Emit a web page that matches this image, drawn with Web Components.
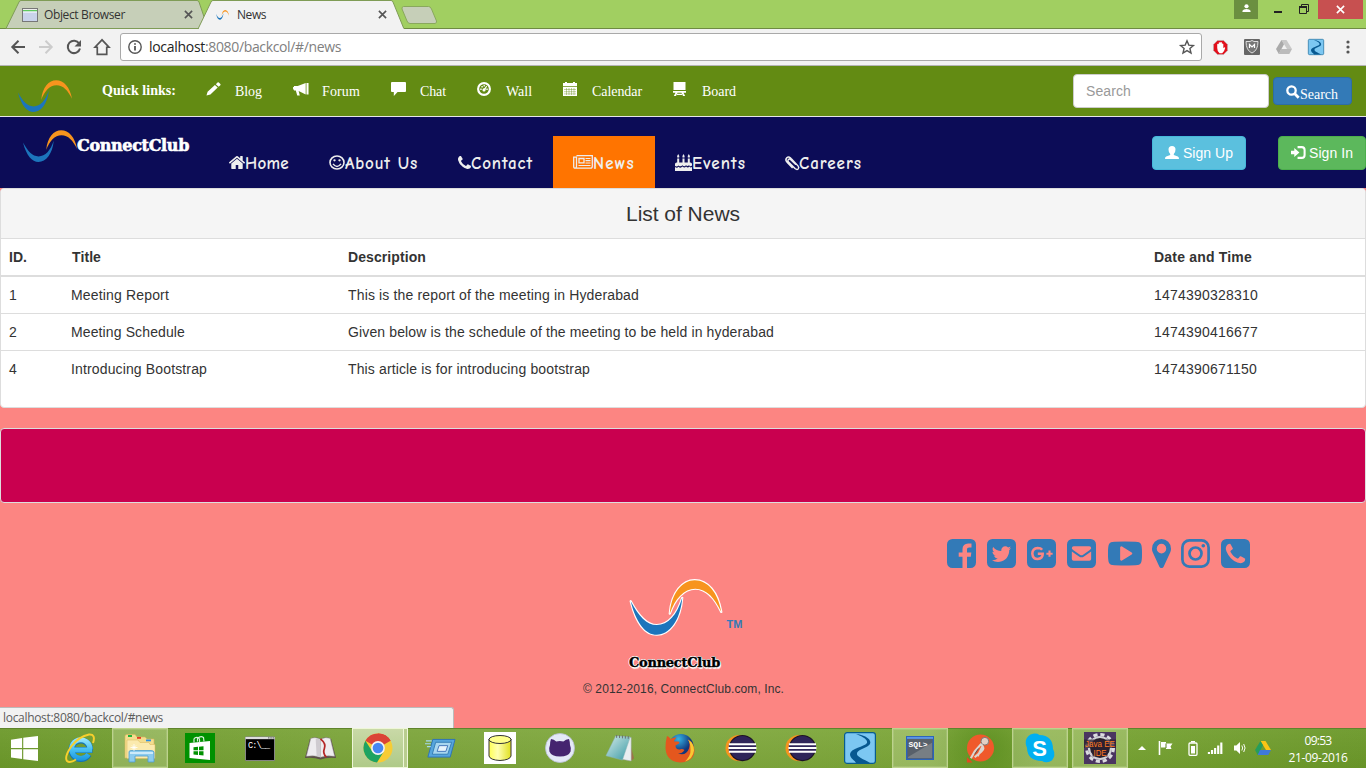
<!DOCTYPE html>
<html lang="en">
<head>
<meta charset="utf-8">
<title>News</title>
<style>
html,body{margin:0;padding:0}
body{width:1366px;height:768px;overflow:hidden;background:#fc8582;font-family:"Liberation Sans",Arial,sans-serif}
</style>
</head>
<body>
<news-desktop></news-desktop>
<script>
const SQ='M1664 416v960q0 119-84.500 203.500t-203.500 84.500h-960q-119 0-203.500-84.500t-84.500-203.500v-960q0-119 84.500-203.500t203.500-84.500h960q119 0 203.500 84.500t84.500 203.500z';
const SWOOSH='<path class="b" fill="#1c75bc" d="M0 38C10 78 27 97 46 97C68 97 88 72 91 32C82 62 66 80 46 80C28 80 14 64 0 38Z"/><path fill="#f7941e" d="M69 60C72 22 92 1 113 1C136 1 154 22 160 57C148 32 134 16 114 16C94 16 78 34 69 60Z"/>';
const RIVER='<rect x=".6" y=".6" width="30.800" height="30.800" rx="2.500" fill="#7cc7f2" stroke="#075c8f" stroke-width="1.200"/><path d="M12 2C22 3 28 8 26 12C24 16 14 17 13 21C12 25 20 27 26 31L12 31C11 28 6 27 6 22C7 16 20 15 23 11C24 8 20 5 12 2Z" fill="#075890"/>';
const ECL='<circle cx="14.500" cy="16" r="14" fill="#f7941e"/><circle cx="18" cy="16" r="14" fill="#1c1226"/><circle cx="18" cy="16" r="12.800" fill="#2f2459"/><path d="M4 11.500h28v9H4z" fill="#2f2459"/><path d="M4 12h28M3.500 16h29M4 20h28" stroke="#fff" stroke-width="2"/>';
const ICONS={
 swoosh:['0 0 160 100',SWOOSH],
 swooshline:['-3 -1 166 102','<g stroke="#fff" stroke-width="4" stroke-linejoin="round">'+SWOOSH.replace(/<path/g,'<path paint-order="stroke"')+'</g>'],
 objwin:['0 0 16 14','<rect x=".5" y=".5" width="15" height="13" fill="#c9d3ea" stroke="#777"/><path d="M1 1h14v1H1z" fill="#eee"/><path d="M1 2h14v1.500H1z" fill="#5fc95f"/><path d="M1 4h14" stroke="#fff"/>'],
 close:['0 0 10 10','<path d="M1 1l8 8M9 1L1 9" stroke="currentColor" stroke-width="1.800"/>'],
 back:['0 0 16 16','<path d="M15 8H2.500M8.500 1.800L2.300 8l6.200 6.200" fill="none" stroke="currentColor" stroke-width="2"/>'],
 forward:['0 0 16 16','<path d="M1 8h12.500M7.500 1.800L13.700 8l-6.200 6.200" fill="none" stroke="currentColor" stroke-width="2"/>'],
 reload:['0 0 16 16','<path d="M13.200 4.500A6.200 6.200 0 1 0 14 9.500" fill="none" stroke="currentColor" stroke-width="2"/><path d="M15 1v6.500H8.500z" fill="currentColor"/>'],
 house:['0 0 16 16','<path d="M8 1.600L1.800 8.200H3.800V14.600h8.400V8.200h2z" fill="none" stroke="currentColor" stroke-width="1.500"/>'],
 info:['0 0 14 14','<circle cx="7" cy="7" r="6.200" fill="none" stroke="#555" stroke-width="1.400"/><path d="M7 6v4.500M7 3.300v1.500" stroke="#555" stroke-width="1.800"/>'],
 star:['0 0 16 16','<path d="M8 1.800l1.800 4.300 4.600.4-3.500 3 1.100 4.500L8 11.600 4 14l1.100-4.500-3.500-3 4.600-.4z" fill="none" stroke="#555" stroke-width="1.400"/>'],
 hand:['0 0 16 16','<path d="M4.700.5h6.600l4.200 4.200v6.600l-4.200 4.200H4.700L.5 11.300V4.700z" fill="#e2101c" stroke="#b6b6b6" stroke-width=".6"/><path d="M4.500 8.500V4.500q.8-1 1.600 0V3q.9-1 1.700 0v-.5q.9-1 1.700.2v1.200q.9-.7 1.500.3v4.500q1.700-1.600 2-.2-1 4-3.200 5.500H7Q4.500 12.500 4.500 8.500z" fill="#fff"/>'],
 shield:['0 0 16 16','<rect width="16" height="16" rx="1" fill="#666"/><path d="M2 2.500h4L8 1.500l2 1h4q0 9-6 11.500Q2 11.500 2 2.500z" fill="#777" stroke="#ddd"/><path d="M5.500 9V5.500L8 8l2.500-2.500V9" fill="none" stroke="#fff" stroke-width="1.200"/>'],
 driveg:['0 0 16 14','<path d="M5.500 0h5L16 9h-5z" fill="#c9c9c9"/><path d="M5.500 0L8 4.300 2.800 14 0 9z" fill="#aaa"/><path d="M5 9h11l-2.700 5H2.700z" fill="#bbb"/>'],
 drivec:['0 0 16 14','<path d="M5.500 0h5L16 9h-5z" fill="#fbc515"/><path d="M5.500 0L8 4.300 2.800 14 0 9z" fill="#259d5b"/><path d="M5 9h11l-2.700 5H2.700z" fill="#3f79d9"/>'],
 river:['0 0 32 32',RIVER],
 dots:['0 0 4 14','<g fill="#555"><circle cx="2" cy="2" r="1.600"/><circle cx="2" cy="7" r="1.600"/><circle cx="2" cy="12" r="1.600"/></g>'],
 person:['0 0 10 10','<circle cx="5" cy="2.500" r="2.300"/><path d="M0.500 9V7.500Q1.500 5.500 5 5.500t4.500 2V9z"/>'],
 restore:['0 0 10 10','<path d="M2.500 2V.5h7v7H8" fill="none" stroke="#222"/><path d="M.5 3h7v6.500h-7z" fill="none" stroke="#222"/><path d="M0 3h8" stroke="#222" stroke-width="2"/>'],
 pencil:['0 0 16 16','<path d="M.5 15.500l1.200-4.300L9.500 3.400l3 3-7.800 7.900zM10.500 2.500L12.300.7q.7-.6 1.400 0l1.600 1.600q.6.700 0 1.400l-1.800 1.800z"/>'],
 horn:['0 0 17 14','<path d="M1 4h4L13.500 1v11.500L6 9l1.200 4.500H4.500L3 8.500H1zM14.300 1h2.200v11.500h-2.200z"/><path d="M0 5h1v2.500H0z"/>'],
 chat:['0 0 16 14','<path d="M1 0h14q1 0 1 1v8q0 1-1 1H7l-4 4v-4H1q-1 0-1-1V1q0-1 1-1z"/>'],
 gauge:['0 0 15 15','<circle cx="7.500" cy="7.500" r="6.300" fill="none" stroke="currentColor" stroke-width="2.300"/><circle cx="7.500" cy="8.500" r="1.700"/><path d="M7 8l3-4 .8.6L8.500 9zM3.500 7h1.500v1.500H3.500zM4.700 4.400h1.500v1.500H4.700zM7 3.200h1.400v1.500H7zM10 7h1.500v1.500H10z"/>'],
 cal:['0 0 14 14','<path d="M0 1h2V0h2v1h6V0h2v1h2v3H0zM0 4.800h14V14H0z"/><path d="M1 7.500h12M1 9.700h12M1 11.900h12M3.500 6v7M6 6v7M8.500 6v7M11 6v7" stroke="#638b13" stroke-width=".4"/>'],
 board:['0 0 13 13','<path d="M.5 0h12v7.500H.5zM0 8.300h13V10H0zM2.500 10h2L3 13H.800zM8.500 10h2l1.700 3h-2.200zM4 10.800h5v1.200H4z"/>'],
 search:['0 0 16 16','<circle cx="6.300" cy="6.300" r="4.800" fill="none" stroke="currentColor" stroke-width="2.600"/><path d="M10 10l4.500 4.500" stroke="currentColor" stroke-width="3.200"/>'],
 user:['0 0 14 13','<path d="M7 0q3.500 0 3.500 3.500 0 3-1.700 4.500v1l4 1.600q1.200.5 1.200 2.400H0q0-1.900 1.200-2.400l4-1.600V8Q3.500 6.500 3.500 3.500 3.500 0 7 0z"/>'],
 login:['0 0 16 13','<path d="M0 4.800h3.500V2L9 6.500 3.500 11V8.200H0z"/><path d="M7 1.100h4.500q3 0 3 3v4.800q0 3-3 3H7" fill="none" stroke="currentColor" stroke-width="2.200"/>'],
 home:['90 250 1612 1290','<path d="M1472 992v480q0 26-19 45t-45 19h-384v-384h-256v384h-384q-26 0-45-19t-19-45v-480q0-1 .5-3t.5-3l575-474 575 474q1 2 1 6zm223-69l-62 74q-8 9-21 11h-3q-13 0-21-7l-692-577-692 577q-12 8-24 7-13-2-21-11l-62-74q-8-10-7-23.500t11-21.500l719-599q32-26 76-26t76 26l244 204v-195q0-14 9-23t23-9h192q14 0 23 9t9 23v408l219 182q10 8 11 21.500t-7 23.500z"/>'],
 smile:['0 0 16 16','<circle cx="8" cy="8" r="7" fill="none" stroke="currentColor" stroke-width="1.600"/><circle cx="5.500" cy="5.600" r="1.200"/><circle cx="10.500" cy="5.600" r="1.200"/><path d="M4 9.500q4 5.500 8 0" fill="none" stroke="currentColor" stroke-width="1.400"/>'],
 phone:['192 128 1408 1408','<path d="M1600 1240q0 27-10 70.500t-21 68.500q-21 50-122 106-94 51-186 51-27 0-53-3.500t-57.500-12.500-47-14.500-55.500-20.500-49-18q-98-35-175-83-127-79-264-216t-216-264q-48-77-83-175-3-9-18-49t-20.500-55.500-14.500-47-12.500-57.500-3.500-53q0-92 51-186 56-101 106-122 25-11 68.500-21t70.500-10q14 0 21 3 18 6 53 76 11 19 30 54t35 63.500 31 53.500q3 4 17.500 25t21.500 35.500 7 28.500q0 20-28.500 50t-62 55-62 53-28.500 46q0 9 5 22.500t8.500 20.500 14 24 11.500 19q76 137 174 235t235 174q2 1 19 11.500t24 14 20.500 8.500 22.500 5q18 0 46-28.500t53-62 55-62 50-28.500q14 0 28.500 7t35.500 21.500 25 17.500q25 15 53.500 31t63.500 35 54 30q70 35 76 53 3 7 3 21z"/>'],
 news:['0 0 20 14','<path d="M3.500.7h15.800v10.500q0 2-1.800 2H2.200q-1.500 0-1.500-1.700V2.200h2.800v9q0 2-1.300 2" fill="none" stroke="currentColor" stroke-width="1.300"/><path d="M6 3.500h5v4.300H6z" fill="none" stroke="currentColor" stroke-width="1.300"/><path d="M12.500 3.500h5M12.500 5.700h5M12.500 8h5M5.500 10.500h12" stroke="currentColor" stroke-width="1.200"/>'],
 cake:['0 0 17 17','<path d="M0 17v-4q2 1.500 3.500-.3 2 2 4-.1 2 2 3.500 0 2 2 3.300 0 1.500 1.500 2.700.4v4zM0 12v-2q0-1.500 1.700-1.500H2.200V4.500h2v4h3.300v-4h2v4h3.300v-4h2v4h.5Q17 8.500 17 10v1.500q-1.500 1.500-3-.2-1.500 1.600-3 0-1.800 2-3.500 0-2 2-4 .1Q2 13 0 12zM2.200 3.500Q1.600 2 3.200 0q1.700 2 1 3.500zM7.500 3.500Q6.900 2 8.500 0q1.700 2 1 3.500zM12.800 3.500Q12.200 2 13.800 0q1.700 2 1 3.500z"/>'],
 clip:['0 0 14 16','<path d="M10.500 9.500L5.500 4.200Q4 3 3 4.200 2 5.500 3.200 6.700l6.500 7q2 1.700 3.200.3 1.200-1.500-.2-3.200L6 3.200Q3.500 0 1.500 2.200-.5 4.500 1.800 7l5.500 6" transform="translate(.3 -.3)" fill="none" stroke="currentColor" stroke-width="1.500"/>'],
 fb:['128 128 1536 1536','<path d="M1376 128q119 0 203.500 84.500t84.500 203.500v960q0 119-84.500 203.500t-203.500 84.500h-188v-595h199l30-232h-229v-148q0-56 23.500-84t91.500-28l122-1v-207q-63-9-178-9-136 0-217.500 80t-81.500 226v171h-200v232h200v595h-532q-119 0-203.500-84.500t-84.500-203.500v-960q0-119 84.500-203.500t203.500-84.500h960z"/>'],
 tw:['128 128 1536 1536','<path d="M1408 610q-56 25-121 34 68-40 93-117-65 38-134 51-61-66-153-66-87 0-148.500 61.500t-61.500 148.500q0 29 5 48-129-7-242-65t-192-155q-29 50-29 106 0 114 91 175-47-1-100-26v2q0 75 50 133.500t123 72.500q-29 8-51 8-13 0-39-4 21 63 74.500 104t121.500 42q-116 90-261 90-26 0-50-3 148 94 322 94 112 0 210-35.500t168-95 120.500-137 75-162 24.500-168.500q0-18-1-27 63-45 105-109z'+SQ+'" fill-rule="evenodd"/>'],
 gp:['128 128 1536 1536','<path d="'+SQ+'"/><path d="M930 700Q860 600 690 600Q420 620 410 900Q430 1180 690 1190Q970 1160 960 910H700" fill="none" stroke="#fc8582" stroke-width="135"/><path d="M1320 740v330M1155 905h330" stroke="#fc8582" stroke-width="110"/>'],
 mail:['128 128 1536 1536','<path d="'+SQ+'"/><path d="M384 620q0-100 100-108h824q100 8 100 108-20 60-90 108L980 960q-80 60-168 0L470 725q-80-50-86-105zM384 790l380 260q130 90 264 0l380-260v400q0 90-96 90H480q-96 0-96-90z" fill="#fc8582"/>'],
 yt:['0 128 1792 1536','<path d="M1280 896q0-37-30-54l-512-320q-31-20-65-2-33 18-33 56v640q0 38 33 56 16 8 31 8 20 0 34-10l512-320q30-17 30-54zm512 0q0 96-1 150t-8.500 136.500-22.500 147.500q-16 73-69 123t-124 58q-222 25-671 25t-671-25q-71-8-124.500-58t-69.500-123q-14-65-21.500-147.500t-8.500-136.500-1-150 1-150 8.500-136.500 22.500-147.500q16-73 69-123t124-58q222-25 671-25t671 25q71 8 124.500 58t69.500 123q14 65 21.500 147.500t8.500 136.500 1 150z"/>'],
 pin:['384 128 1024 1536','<path d="M1152 640q0-106-75-181t-181-75-181 75-75 181 75 181 181 75 181-75 75-181zm256 0q0 109-33 179l-364 774q-16 33-47.500 52t-67.500 19-67.500-19-46.500-52l-365-774q-33-70-33-179 0-212 150-362t362-150 362 150 150 362z"/>'],
 insta:['0 0 29 29','<rect x="1.400" y="1.400" width="26.200" height="26.200" rx="7" fill="none" stroke="currentColor" stroke-width="2.700"/><circle cx="14.500" cy="14.500" r="6" fill="none" stroke="currentColor" stroke-width="2.700"/><circle cx="22.300" cy="6.700" r="1.800"/>'],
 phonesq:['128 128 1536 1536','<path fill-rule="evenodd" d="M1408 1193q0-11-2-16t-18-16.500-40.500-25-47.500-26.500-45.500-25-28.500-15q-5-3-19-13t-25-15-21-5q-15 0-36.500 20.500t-39.500 45-38.500 45-33.500 20.500q-7 0-16.500-3.500t-15.500-6.500-17-9.500-14-8.500q-99-55-170-126.500t-127-170.500q-2-3-8.500-14t-9.500-17-6.500-15.500-3.500-16.500q0-13 20.500-33.500t45-38.500 45-39.500 20.500-36.500q0-10-5-21t-15-25-13-19q-3-6-15-28.500t-25-45.500-26.500-47.500-25-40.500-16.500-18-16-2q-48 0-101 22-46 21-80 94.500t-34 130.500q0 16 2.500 34t5 30.500 9 33 10 29.500 12.500 33 11 30q60 164 216.500 320.500t320.500 216.500q6 2 30 11t33 12.500 29.500 10 33 9 30.500 5 34 2.500q57 0 130.500-34t94.500-80q22-53 22-101z'+SQ+'"/>'],
 win:['0 0 28 26','<path fill="#fff" d="M0 3.800L11.500 2v10.500H0zM12.700 1.800L28 0v12.500H12.700zM0 13.700h11.500V24L0 22.300zM12.700 13.700H28V26l-15.300-1.900z"/>'],
 ie:['0 0 32 32','<defs><linearGradient id="g" gradientUnits="userSpaceOnUse" x1="0" y1="5" x2="0" y2="30"><stop stop-color="#a5ecfd"/><stop offset=".5" stop-color="#48c0f2"/><stop offset="1" stop-color="#1390dc"/></linearGradient></defs><g fill="none"><path d="M9 18H28.500M26.100 18A9.300 9.300 0 1 0 24.800 22.500" stroke="#1474b4" stroke-width="6"/><path d="M9.500 18H28M26.100 17.500A9.300 9.300 0 1 0 24.500 22.300" stroke="url(#g)" stroke-width="4.800"/><path d="M29 11Q32 2 25 2.500 15 4.500 7.500 14 0 25 3 29q3 2.500 9-1.500" stroke="#f8cf2d" stroke-width="2"/></g>'],
 folder:['0 0 32 32','<path d="M1 4q0-1.500 2-1.500h8l2 2.500h8l2 2h7v19H1z" fill="#f4dd8e" stroke="#d8b65a" stroke-width=".6"/><path d="M3 8h11l2 2.500h9l1 2h5v14H3z" fill="#fbeaae" stroke="#d8b65a" stroke-width=".5"/><path d="M4 3h4v2H4z" fill="#1fb43a"/><path d="M13 5h4v1.800h-4z" fill="#e53b22"/><path d="M22 7.500h5v1.800h-5z" fill="#2c8ee0"/><path d="M5 20q0-1.500 2-1.500h20q3 0 3 2V30h-6v-6H11v6H5z" fill="#8ccbee" stroke="#4f9dce" stroke-width=".8"/><path d="M6 20h23v2H6z" fill="#cdeafa"/><path d="M10 12v7M6.500 15.500h7M8 13.500l4 4M12 13.500l-4 4" stroke="#fff" stroke-width=".8"/>'],
 store:['0 0 30 30','<path d="M0 0h30v30H0z" fill="#009100"/><path d="M4.500 10l20.500-2v19L4.500 25z" fill="#fff"/><path d="M9 9.500V6q1-2 4-1.500 2 .5 1.500 5M12.500 8.500V5.500q3-3 6-1l.5 4" fill="none" stroke="#d9efd9" stroke-width="1.200"/><path d="M8.500 14.200l4.500-.4v3.500H8.500zM14 13.700l4.500-.4v4H14zM8.500 18.200H13V22l-4.500-.4zM14 18.200h4.500v4.300L14 22z" fill="#009100"/>'],
 cmd:['0 0 30 26','<path d="M.5 1h29v24.500H.5z" fill="#000" stroke="#888"/><path d="M.5 1h29v2.300H.5z" fill="#ddd"/><path d="M23 2h1.500M25.300 2h1.500M27.500 2H29" stroke="#555"/><text x="3" y="12.500" font-family="Liberation Mono,monospace" font-size="8.500" fill="#fff" textLength="22">C:\\__</text>'],
 book:['0 0 34 26','<path d="M1 23L6 3q5-3 11 0 6-3 11 0l5 20q-9-1-16 1.500Q10 22 1 23z" fill="#5d504a"/><path d="M2.500 21L7 2.500q5-2 10 1V22q-6-2.500-14.500-1zM31.500 21L27 2.500q-5-2-10 1V22q6-2.500 14.500-1z" fill="#eeecef" stroke="#aaa" stroke-width=".5"/><path d="M12 2.500l5 1V22l-4-1.200z" fill="#cfcbd0"/><path d="M17 3q6 5 4 10t2 9" fill="none" stroke="#b42727" stroke-width="1.800"/>'],
 chrome:['0 0 30 30','<circle cx="15" cy="15" r="14.500" fill="#f7cc35"/><path d="M15 15L2.400 7.800A14.500 14.500 0 0 1 27.600 7.800z" fill="#db4437"/><path d="M15 .5A14.500 14.500 0 0 1 27.600 7.800H15z" fill="#db4437"/><path d="M2.400 7.700A14.500 14.500 0 0 0 14 29.500l6.500-10.500L9 18z" fill="#1da362"/><circle cx="15" cy="15" r="6.900" fill="#f3f3f3"/><circle cx="15" cy="15" r="5.300" fill="#4687f2"/>'],
 runner:['0 0 32 22','<path d="M8 1.500h23l-5 18.500H3z" fill="#56a5dc" stroke="#2d73b8"/><path d="M11 4.500h16.500L23.500 17H7.500z" fill="#a7d6ef" stroke="#357eb5"/><path d="M14.500 8h9l-2 6h-9z" fill="#e6f3fb" stroke="#4377ba"/><path d="M1 3h6M0 6h6M2 9h4" stroke="#a6d9ee" stroke-width="1.200"/>'],
 db:['0 0 32 32','<path d="M0 0h32v32H0z" fill="#fff"/><defs><linearGradient id="g"><stop stop-color="#ff5"/><stop offset=".4" stop-color="#ffffb0"/><stop offset="1" stop-color="#e0e020"/></linearGradient></defs><path d="M5 7v17q1 4 11 4.500 10-.5 11-4.500V7z" fill="url(#g)" stroke="#333"/><ellipse cx="16" cy="7.500" rx="11" ry="4" fill="#ffff8c" stroke="#333"/>'],
 cat:['0 0 30 30','<circle cx="15" cy="15" r="14.500" fill="#e4e9f7" stroke="#b9bfd5" stroke-width=".8"/><path d="M6 6q3 .5 5.200 2.400 3.600-.6 7.200 0Q20.800 6.500 24 6q1.200 3.600 1 6 1.400 3 .6 6.500-2 5-10.600 5t-10.600-5q-.8-3.500.6-6.500Q4.800 9.600 6 6z" fill="#45246f"/>'],
 notepad:['0 0 32 30','<defs><linearGradient id="g" x2="1" y2="1"><stop stop-color="#d5ebe9"/><stop offset="1" stop-color="#3798a3"/></linearGradient></defs><path d="M24 3l6 22-3 3z" fill="#9b7449"/><path d="M11 2l16 1.500L27 28 17 26z" fill="#e9eef0" stroke="#98a3a6" stroke-width=".5"/><path d="M11 2l15 1.200L18 27 1 22.500z" fill="url(#g)" stroke="#8cb4b5" stroke-width=".5"/><path d="M12 1v3M15 1.200v3M18 1.500v3M21 1.800v3M24 2v3" stroke="#666" stroke-width=".9"/>'],
 fox:['0 0 30 30','<defs><radialGradient id="g" cx=".4" cy=".2"><stop stop-color="#35b4e6"/><stop offset="1" stop-color="#12377d"/></radialGradient></defs><circle cx="16" cy="13.500" r="12.500" fill="url(#g)"/><path d="M2 3q2 .5 3.500 3 3-2 6-1.500-2 2-2.500 4h4q2 0 1 2l-3.500 2q0 4 4 4 3-1 5 .5-2 3.500-6.500 3.500 8 3 11-5 1.500-5-1-9 6 3.500 6.500 11Q29 29 15 29.500 1 28.500.5 15 .5 8 2 3z" fill="#e4571e"/><path d="M23 6.500q6 3.500 6 11Q28 26 20 28.500q6-6 5.500-12Q25.500 10 23 6.500z" fill="#f9c833"/>'],
 eclipse:['0 0 32 32',ECL],
 sql:['0 0 28 25','<path d="M.7.700h26.600v23.600H.7z" fill="#58606a" stroke="#2c63bb" stroke-width="1.400"/><path d="M1 1h26v2H1z" fill="#5b96e5"/><path d="M2 22L26 7v16H2z" fill="#777e84"/><text x="2.500" y="11" font-family="Liberation Mono,monospace" font-size="8" font-weight="bold" fill="#fff" textLength="19">SQL&gt;</text>'],
 postman:['0 0 30 30','<circle cx="15" cy="14.500" r="14" fill="#f0592b"/><path d="M1 24l6 5.500H1z" fill="#e24a20"/><circle cx="19.500" cy="7.500" r="4" fill="#e3cfc4" stroke="#777" stroke-width="1"/><path d="M16 10l-7 8-4 7M16 11q4 4 0 7l-7 6M17 13l-5 10" fill="none" stroke="#ddd5cf" stroke-width="2.200"/><path d="M13 15l-4 6" stroke="#555"/>'],
 skype:['0 0 30 30','<path d="M8 .7q4-.5 6.500 1.200Q28 2.500 28 16q2 3 1.300 7-2 6.500-8 6.200-2.500-.2-4.300-1.300Q2.500 28 2 15 0 11.500.8 7.500 2.500 1.700 8 .7z" fill="#00aff0"/><text x="7.300" y="22.500" font-family="Liberation Sans,sans-serif" font-weight="bold" font-size="22" fill="#fff" textLength="15.500">S</text>'],
 javaee:['0 0 32 32','<path d="M0 0h32v32H0z" fill="#4a3560"/><circle cx="16" cy="16" r="13.500" fill="none" stroke="#dcdce0" stroke-width="3" stroke-dasharray="4.200 2.860"/><circle cx="16" cy="16" r="11" fill="#28202c" stroke="#d2d2d6" stroke-width="2.200"/><path d="M0 7.500h32v8.500H0zM8.500 16h15v8.500h-15z" fill="#2e2030" opacity=".75"/><text x="1" y="15" font-family="Liberation Sans,sans-serif" font-size="9.500" fill="#ff7a22" textLength="30" lengthAdjust="spacingAndGlyphs">Java EE</text><text x="9.500" y="23.500" font-family="Liberation Sans,sans-serif" font-size="9.500" fill="#ff7a22" textLength="13" lengthAdjust="spacingAndGlyphs">IDE</text>'],
 up:['0 0 8 5','<path d="M0 4L4 0l4 4z" fill="#fff"/>'],
 flag:['0 0 16 16','<path d="M1.500 1v14" stroke="#fff" stroke-width="1.600"/><path d="M3 2h5v1.500h6.500l-2 3 1 2.500H8V7.500H3z" fill="#fff"/><path d="M8 3.500V8" stroke="#587d25"/>'],
 battery:['0 0 10 15','<path d="M3 0h4v1.500H3z" fill="#fff"/><rect x="1" y="2" width="8" height="12.300" rx="1" fill="none" stroke="#fff" stroke-width="1.300"/><path d="M3 5h4v7.500H3z" fill="#fff"/>'],
 signal:['0 0 16 12','<path d="M1 12v-2M4.300 12V8M7.600 12V6M10.900 12V3.500M14.200 12V.5" stroke="#fff" stroke-width="2.300"/>'],
 speaker:['0 0 13 14','<path d="M0 4.500h2.500L6.500 1v12L2.500 9.500H0z" fill="#fff"/><path d="M8.500 4.500q1.700 2.500 0 5M10.500 3q3 4 0 8" fill="none" stroke="#fff" stroke-width="1"/>']
};

/* Inline icon: <ui-icon name w h> */
customElements.define('ui-icon',class extends HTMLElement{
 connectedCallback(){
  if(this.shadowRoot)return;
  const [vb,body]=ICONS[this.getAttribute('name')],w=this.getAttribute('w'),h=this.getAttribute('h')||w;
  this.attachShadow({mode:'open'}).innerHTML=`<style>:host{display:inline-block;flex:none;width:${w}px;height:${h}px}svg{display:block;overflow:visible}</style><svg width="${w}" height="${h}" viewBox="${vb}" preserveAspectRatio="none" fill="currentColor">${body}</svg>`;
 }
});
/* Label tracked to an exact width */
customElements.define('fit-text',class extends HTMLElement{
 connectedCallback(){
  if(this.shadowRoot)return;
  const w=+this.getAttribute('w'),n=this.textContent.length;
  this.attachShadow({mode:'open'}).innerHTML=`<style>:host{display:inline-block;flex:none;white-space:pre;width:${w}px}</style><span><slot></slot></span>`;
  const s=this.shadowRoot.querySelector('span');
  s.style.letterSpacing=(w-s.getBoundingClientRect().width)/n+'px';
 }
});
const define=(name,html)=>customElements.define(name,class extends HTMLElement{
 connectedCallback(){if(!this.shadowRoot)this.attachShadow({mode:'open'}).innerHTML=typeof html==='function'?html(this):html}
});

define('tab-strip',`<style>
:host{display:block;height:29px;background:#a1cf61;position:relative;font:12px/16px "Open Sans","Noto Sans",sans-serif;color:#333}
svg.shape{position:absolute;left:0;top:0}
.row{position:relative;display:flex;height:29px}
.tab{display:flex;align-items:center;height:29px;box-sizing:border-box}
.t1{width:193px;padding-left:22px;margin-right:12px}.t2{width:182px;padding-left:11px}
.tab ui-icon:last-child{margin-left:auto;color:#555}
fit-text{margin-left:6px}
.ctl{margin-left:auto;display:flex;align-items:flex-start}
.who{width:24px;height:19px;background:#6b8f40;color:#fff;display:flex;justify-content:center;padding-top:4px;box-sizing:border-box}
.min{width:8px;height:2px;background:#222;margin:11px 17px 0 16px}
.x{width:45px;height:19px;background:#c75050;color:#fff;display:flex;align-items:center;justify-content:center;margin:0 3px 0 9px}
</style>
<svg class="shape" width="1366" height="29"><path d="M0 28.500H1366" stroke="#6e8b42"/><path d="M6 28.500L19 2q.5-1.500 2-1.500H197q1.500 0 2 1.500l9 26.500z" fill="#c6cfb8" stroke="#7f9c56"/><path d="M402 9q-.5-2 1.500-2.500h25q2 0 3 2.500l5 12q.5 2-1.500 2.500h-25q-2 0-3-2.500z" fill="#c6cfb8" stroke="#89a85d"/><path d="M198 29L211 2q.5-1.500 2-1.500H391q1.500 0 2 1.500L404 29z" fill="#f2f2f2" stroke="#7f9c56"/><path d="M199 28.500H403.500" stroke="#f2f2f2"/></svg>
<div class="row"><div class="tab t1"><ui-icon name="objwin" w="16" h="14"></ui-icon><fit-text w="81">Object Browser</fit-text><ui-icon name="close" w="9"></ui-icon></div>
<div class="tab t2"><ui-icon name="swoosh" w="13" h="10"></ui-icon><fit-text w="29" style="margin-left:8px">News</fit-text><ui-icon name="close" w="9"></ui-icon></div>
<div class="ctl"><div class="who"><ui-icon name="person" w="9"></ui-icon></div><div class="min"></div><ui-icon name="restore" w="10" style="margin-top:4px"></ui-icon><div class="x"><ui-icon name="close" w="9"></ui-icon></div></div></div>`);

define('address-bar',`<style>
:host{display:flex;align-items:center;height:37px;box-sizing:border-box;background:#f2f2f2;border-bottom:1px solid #b5b5b5;padding:0 15px 0 10px;color:#555;font:14px/20px "Open Sans","Noto Sans",sans-serif}
.url{display:flex;align-items:center;box-sizing:border-box;width:1082px;height:28px;background:#fff;border:1px solid #a9a9a9;border-radius:3px;padding:0 6px 0 7px;margin:0 11px 0 10px}
.url ui-icon:last-child{margin-left:auto}
.path{color:#808080}
</style><ui-icon name="back" w="16"></ui-icon><ui-icon name="forward" w="16" style="color:#ccc;margin-left:12px"></ui-icon><ui-icon name="reload" w="16" style="margin-left:12px"></ui-icon><ui-icon name="house" w="18" style="margin-left:11px;margin-right:-1px"></ui-icon>
<div class="url"><ui-icon name="info" w="14"></ui-icon><fit-text w="56" style="color:#222;margin-left:7px">localhost</fit-text><fit-text w="136" class="path">:8080/backcol/#/news</fit-text><ui-icon name="star" w="16"></ui-icon></div>
<ui-icon name="hand" w="15"></ui-icon><ui-icon name="shield" w="16" style="margin-left:16px"></ui-icon><ui-icon name="driveg" w="16" h="14" style="margin-left:16px"></ui-icon><ui-icon name="river" w="16" style="margin-left:16px"></ui-icon><ui-icon name="dots" w="4" h="14" style="margin-left:22px"></ui-icon>`);

define('quick-link',e=>`<style>:host{display:flex;margin-right:31px;height:20px}span{width:29px;display:flex;align-items:flex-start;flex:none}</style><span><ui-icon name="${e.getAttribute('icon')}" w="${e.getAttribute('iw')}" h="14"></ui-icon></span><div style="padding-top:1px"><slot></slot></div>`);

define('quick-bar',`<style>
:host{display:flex;align-items:flex-start;height:51px;box-sizing:border-box;background:#638b13;border-bottom:1px solid #e7e7e7;color:#fff;font:14px/18px "Liberation Serif",serif;padding:0 14px 0 18px}
.ql{font-weight:bold;margin:16px 30px 0}
.links{display:flex;padding-top:16px}
.field{margin:8px 4px 0 auto;width:196px;height:34px;box-sizing:border-box;border:1px solid #ccc;border-radius:4px;background:#fff;color:#999;font:14px/32px "Liberation Sans",sans-serif;padding-left:12px}
.btn{width:79px;height:28px;margin-top:11px;box-sizing:border-box;border:1px solid #2e6da4;border-radius:4px;background:#337ab7;display:flex;padding:7px 0 0 12px}
</style><ui-icon name="swoosh" w="54" h="33" style="margin-top:14px"></ui-icon><div class="ql"><fit-text w="74">Quick links:</fit-text></div>
<div class="links"><quick-link icon="pencil" iw="15"><fit-text w="27">Blog</fit-text></quick-link><quick-link icon="horn" iw="16"><fit-text w="38">Forum</fit-text></quick-link><quick-link icon="chat" iw="15"><fit-text w="26">Chat</fit-text></quick-link><quick-link icon="gauge" iw="14"><fit-text w="26">Wall</fit-text></quick-link><quick-link icon="cal" iw="14"><fit-text w="50">Calendar</fit-text></quick-link><quick-link icon="board" iw="13"><fit-text w="34">Board</fit-text></quick-link></div>
<div class="field"><fit-text w="45">Search</fit-text></div><div class="btn"><ui-icon name="search" w="14"></ui-icon><fit-text w="38" style="line-height:20px">Search</fit-text></div>`);

define('nav-item',e=>`<style>:host{display:flex;height:52px;padding:0 20px;box-sizing:border-box;color:#eee;font:bold 17px/56px "Comic Sans MS","Comic Neue",Lato,sans-serif}:host([active]){background:#ff7400}ui-icon{align-self:flex-start}</style><ui-icon name="${e.getAttribute('icon')}" w="${e.getAttribute('iw')}" h="${e.getAttribute('ih')}" style="margin-top:${e.getAttribute('it')}px"></ui-icon><slot></slot>`);

define('club-nav',`<style>
:host{display:flex;align-items:flex-start;height:71px;background:#0c0c57;color:#fff;padding-left:23px;box-sizing:border-box}
.brand{font:900 16px/20px "Cooper Black","DejaVu Serif",serif;-webkit-text-stroke:.6px #fff;margin-top:19px}
.menu{display:flex;margin:19px 0 0 20px}
.btn{height:34px;box-sizing:border-box;border:1px solid;border-radius:4px;display:flex;align-items:center;padding-left:12px;margin-top:19px;font-size:14px;flex:none}
.up{width:94px;background:#5bc0de;border-color:#46b8da;margin-left:auto;margin-right:32px}
.in{width:88px;background:#5cb85c;border-color:#4cae4c}
</style><ui-icon name="swoosh" w="54" h="33" style="margin-top:13px"></ui-icon><div class="brand"><fit-text w="112">ConnectClub</fit-text></div>
<div class="menu"><nav-item icon="home" iw="16" ih="13" it="20"><fit-text w="44">Home</fit-text></nav-item><nav-item icon="smile" iw="16" ih="15" it="19"><fit-text w="73">About Us</fit-text></nav-item><nav-item icon="phone" iw="13" ih="13" it="20"><fit-text w="62">Contact</fit-text></nav-item><nav-item active icon="news" iw="20" ih="14" it="19"><fit-text w="42">News</fit-text></nav-item><nav-item icon="cake" iw="17" ih="17" it="18"><fit-text w="54" style="margin-right:-1px">Events</fit-text></nav-item><nav-item icon="clip" iw="14" ih="15" it="20"><fit-text w="63">Careers</fit-text></nav-item></div>
<div class="btn up"><ui-icon name="user" w="14" h="13" style="margin-top:-2px"></ui-icon><fit-text w="50" style="margin-left:4px">Sign Up</fit-text></div><div class="btn in"><ui-icon name="login" w="15" h="13" style="margin-top:-1px"></ui-icon><fit-text w="44" style="margin-left:3px">Sign In</fit-text></div>`);

define('news-panel',()=>{
 const rows=[['1',['Meeting Report',98],['This is the report of the meeting in Hyderabad',291],['1474390328310',104]],['2',['Meeting Schedule',114],['Given below is the schedule of the meeting to be held in hyderabad',426],['1474390416677',104]],['4',['Introducing Bootstrap',136],['This article is for introducing bootstrap',242],['1474390671150',103]]];
 return `<style>
:host{display:block;height:220px;box-sizing:border-box;border:1px solid #ddd;border-radius:4px;background:#fff;color:#333;font-size:14px;line-height:20px;overflow:hidden}
.head{height:50px;box-sizing:border-box;background:#f5f5f5;border-bottom:1px solid #ddd;text-align:center;font-size:21px;line-height:49px}
.r{display:grid;grid-template-columns:62px 277px 806px 1fr;padding:8px 0 8px 8px;height:37px;box-sizing:border-box;border-top:1px solid #ddd}
.h{border-top:0;border-bottom:2px solid #ddd;height:38px;font-weight:bold}
.h+.r{border-top:0;height:36px}
</style><div class="head"><fit-text w="114">List of News</fit-text></div>
<div class="r h"><div><fit-text w="18">ID.</fit-text></div><div style="padding-left:1px"><fit-text w="29">Title</fit-text></div><div><fit-text w="78">Description</fit-text></div><div><fit-text w="98">Date and Time</fit-text></div></div>`+rows.map(([id,...c])=>`<div class="r"><div>${id}</div>${c.map(([t,w])=>`<div><fit-text w="${w}">${t}</fit-text></div>`).join('')}</div>`).join('');
});

define('social-links',`<style>:host{display:flex;color:#337ab7;height:29px}</style>
<ui-icon name="fb" w="29"></ui-icon><ui-icon name="tw" w="29" style="margin-left:11px"></ui-icon><ui-icon name="gp" w="29" style="margin-left:11px"></ui-icon><ui-icon name="mail" w="29" style="margin-left:11px"></ui-icon><ui-icon name="yt" w="34" h="29" style="margin-left:12px"></ui-icon><ui-icon name="pin" w="19" h="29" style="margin-left:10px"></ui-icon><ui-icon name="insta" w="29" style="margin-left:10px"></ui-icon><ui-icon name="phonesq" w="29" style="margin-left:11px"></ui-icon>`);

define('club-footer',`<style>
:host{display:flex;flex-direction:column;align-items:center;color:#333}
social-links{align-self:flex-end;margin-right:116px}
.logo{display:flex;margin:11px 0 0 5px}
.tm{color:#337ab7;font:bold 11px/14px "Liberation Sans",sans-serif;margin:38px 0 0 4px}
.name{font:900 13px/16px "Cooper Black","DejaVu Serif",serif;color:#000;margin:18px 0 0 -17px;text-shadow:1px 0 #fff,0 1px #fff,-1px 0 #fff,0 -1px #fff,1px 1px #fff,1px 2px 1px #fff;-webkit-text-stroke:.4px #000}
.copy{font-size:12px;line-height:16px;margin:10px 0 0 1px}
</style><social-links></social-links><div class="logo"><ui-icon name="swooshline" w="94" h="58"></ui-icon><div class="tm"><fit-text w="16">TM</fit-text></div></div><div class="name"><fit-text w="91">ConnectClub</fit-text></div><div class="copy"><fit-text w="201">© 2012-2016, ConnectClub.com, Inc.</fit-text></div>`);

define('task-cell',e=>`<style>:host{width:56px;height:40px;margin-right:4px;box-sizing:border-box;display:flex;align-items:center;justify-content:center;flex:none;border:1px solid transparent}
:host([open]){background:rgba(235,245,205,.27);border-color:#bdd38c;box-shadow:inset 0 0 0 1px rgba(255,255,255,.12)}
:host([active]){width:52px;margin:0 0 0 -4px;background:linear-gradient(#c9d9a7,#afca88);border:1px solid #eef6d8}
</style><ui-icon name="${e.getAttribute('icon')}" w="${e.getAttribute('w')}" h="${e.getAttribute('h')||e.getAttribute('w')}"></ui-icon>`);

define('task-bar',`<style>
:host{display:flex;height:40px;box-sizing:border-box;background:radial-gradient(ellipse 60px 60px at 985px 20px,rgba(86,138,27,.75) 0,rgba(86,138,27,0) 100%),linear-gradient(rgba(255,255,255,.05),rgba(0,0,0,.03)),linear-gradient(90deg,#6c992a,#7ba439 25%,#80a83e 50%,#77a332 80%,#6b9829);box-shadow:inset 0 1px #5f842c;color:#fff;font:12px/17px "Open Sans","Noto Sans",sans-serif;align-items:center;overflow:hidden}
.stack{width:3px;height:38px;border:1px solid #eef6d8;border-left:0;background:#b9cd8f;margin-right:4px}
.tray{display:flex;align-items:center;margin-left:8px}
.clock{margin-left:17px;text-align:center;width:60px;padding-top:1px}
</style><div style="width:52px;display:flex;padding-left:11px;box-sizing:border-box"><ui-icon name="win" w="27" h="25"></ui-icon></div>
<task-cell icon="ie" w="32"></task-cell><task-cell icon="folder" w="32" open></task-cell><task-cell icon="store" w="30"></task-cell><task-cell icon="cmd" w="30" h="25"></task-cell><task-cell icon="book" w="33" h="25"></task-cell><task-cell icon="chrome" w="30" active style="margin-left:0"></task-cell><div class="stack"></div>
<task-cell icon="runner" w="31" h="21"></task-cell><task-cell icon="db" w="32"></task-cell><task-cell icon="cat" w="30"></task-cell><task-cell icon="notepad" w="31" h="29"></task-cell><task-cell icon="fox" w="30"></task-cell><task-cell icon="eclipse" w="31" h="30"></task-cell><task-cell icon="eclipse" w="31" h="30"></task-cell><task-cell icon="river" w="32"></task-cell><task-cell icon="sql" w="28" h="24" open></task-cell><task-cell icon="postman" w="29"></task-cell><task-cell icon="skype" w="30" open></task-cell><task-cell icon="javaee" w="32" open></task-cell>
<div class="tray"><ui-icon name="up" w="8" h="5" style="margin-left:-2px"></ui-icon><ui-icon name="flag" w="16" style="margin-left:12px"></ui-icon><ui-icon name="battery" w="10" h="15" style="margin-left:14px"></ui-icon><ui-icon name="signal" w="15" h="12" style="margin-left:10px"></ui-icon><ui-icon name="speaker" w="12" h="14" style="margin-left:11px"></ui-icon><ui-icon name="drivec" w="16" h="14" style="margin-left:9px"></ui-icon></div>
<div class="clock"><fit-text w="27">09:53</fit-text><br><fit-text w="59">21-09-2016</fit-text></div>`);

define('news-desktop',`<style>
:host{display:flex;flex-direction:column;width:1366px;height:768px;position:relative;overflow:hidden}
.band{height:75px;box-sizing:border-box;border:1px solid #ddd;border-radius:4px;background:#c9004f;margin:20px 0 36px}
task-bar{margin-top:auto;flex:none}
.status{position:absolute;left:0;top:707px;width:454px;height:21px;box-sizing:border-box;background:#f2f2f2;border:1px solid #bbb;border-width:1px 1px 0 0;border-radius:0 3px 0 0;color:#5c5c5c;font:12px/19px "Open Sans","Noto Sans",sans-serif;padding-left:3px}
</style><tab-strip></tab-strip><address-bar></address-bar><quick-bar></quick-bar><club-nav></club-nav><news-panel></news-panel><div class="band"></div><club-footer></club-footer><div class="status"><fit-text w="160">localhost:8080/backcol/#news</fit-text></div><task-bar></task-bar>`);
</script>
</body>
</html>
